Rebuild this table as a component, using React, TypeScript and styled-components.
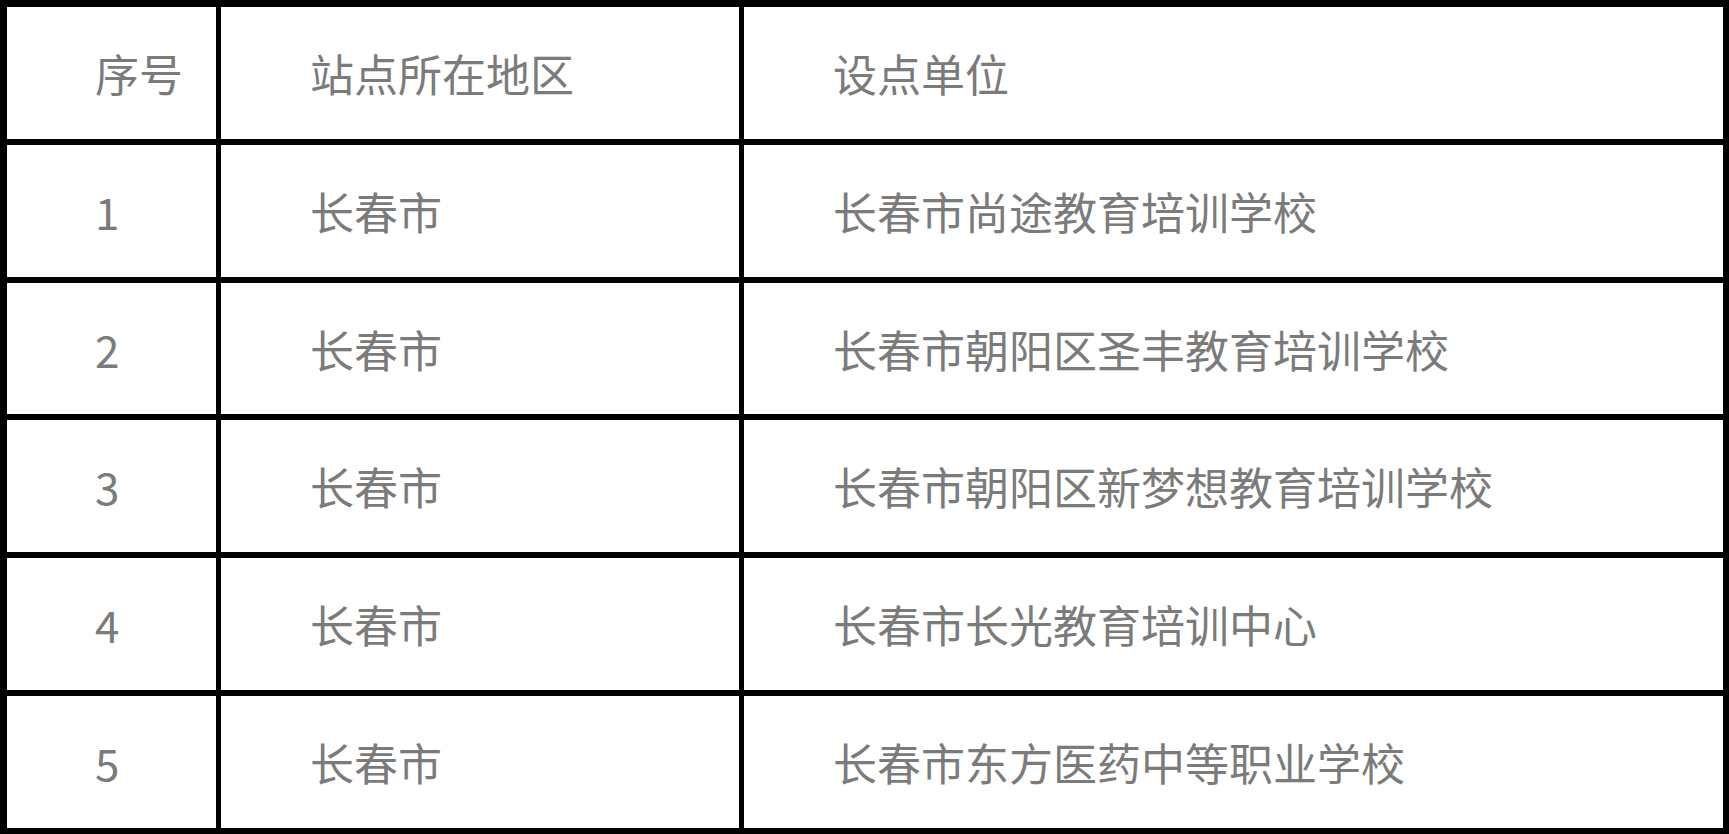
import React from "react";
import styled, { createGlobalStyle } from "styled-components";

const Global = createGlobalStyle`
  html, body { margin: 0; padding: 0; background: #ffffff; }
  body { font-family: "Noto Sans CJK SC", "Noto Sans", sans-serif; }
`;

const Table = styled.div`
  box-sizing: border-box;
  width: 1729px;
  height: 834px;
  background: #000000;
  padding: 7px 6px 6px 7px;
  display: grid;
  grid-template-columns: 209px 518px 979px;
  grid-template-rows: repeat(6, 1fr);
  column-gap: 5px;
  row-gap: 6px;
`;

const Cell = styled.div<{ $pad: number }>`
  background: #ffffff;
  display: flex;
  align-items: center;
  padding-left: ${(p) => p.$pad}px;
  font-family: "Noto Sans CJK SC", "Noto Sans", sans-serif;
  font-size: 44px;
  font-weight: 400;
  line-height: 1;
  color: #7b7b7b;
  white-space: nowrap;
`;

const rows: [string, string, string][] = [
  ["序号", "站点所在地区", "设点单位"],
  ["1", "长春市", "长春市尚途教育培训学校"],
  ["2", "长春市", "长春市朝阳区圣丰教育培训学校"],
  ["3", "长春市", "长春市朝阳区新梦想教育培训学校"],
  ["4", "长春市", "长春市长光教育培训中心"],
  ["5", "长春市", "长春市东方医药中等职业学校"],
];

const pads = [88, 89, 89];

export default function App() {
  return (
    <>
      <Global />
      <Table role="table">
        {rows.map((r, i) =>
          r.map((t, j) => (
            <Cell key={`${i}-${j}`} $pad={pads[j]} role="cell">
              {t}
            </Cell>
          ))
        )}
      </Table>
    </>
  );
}
